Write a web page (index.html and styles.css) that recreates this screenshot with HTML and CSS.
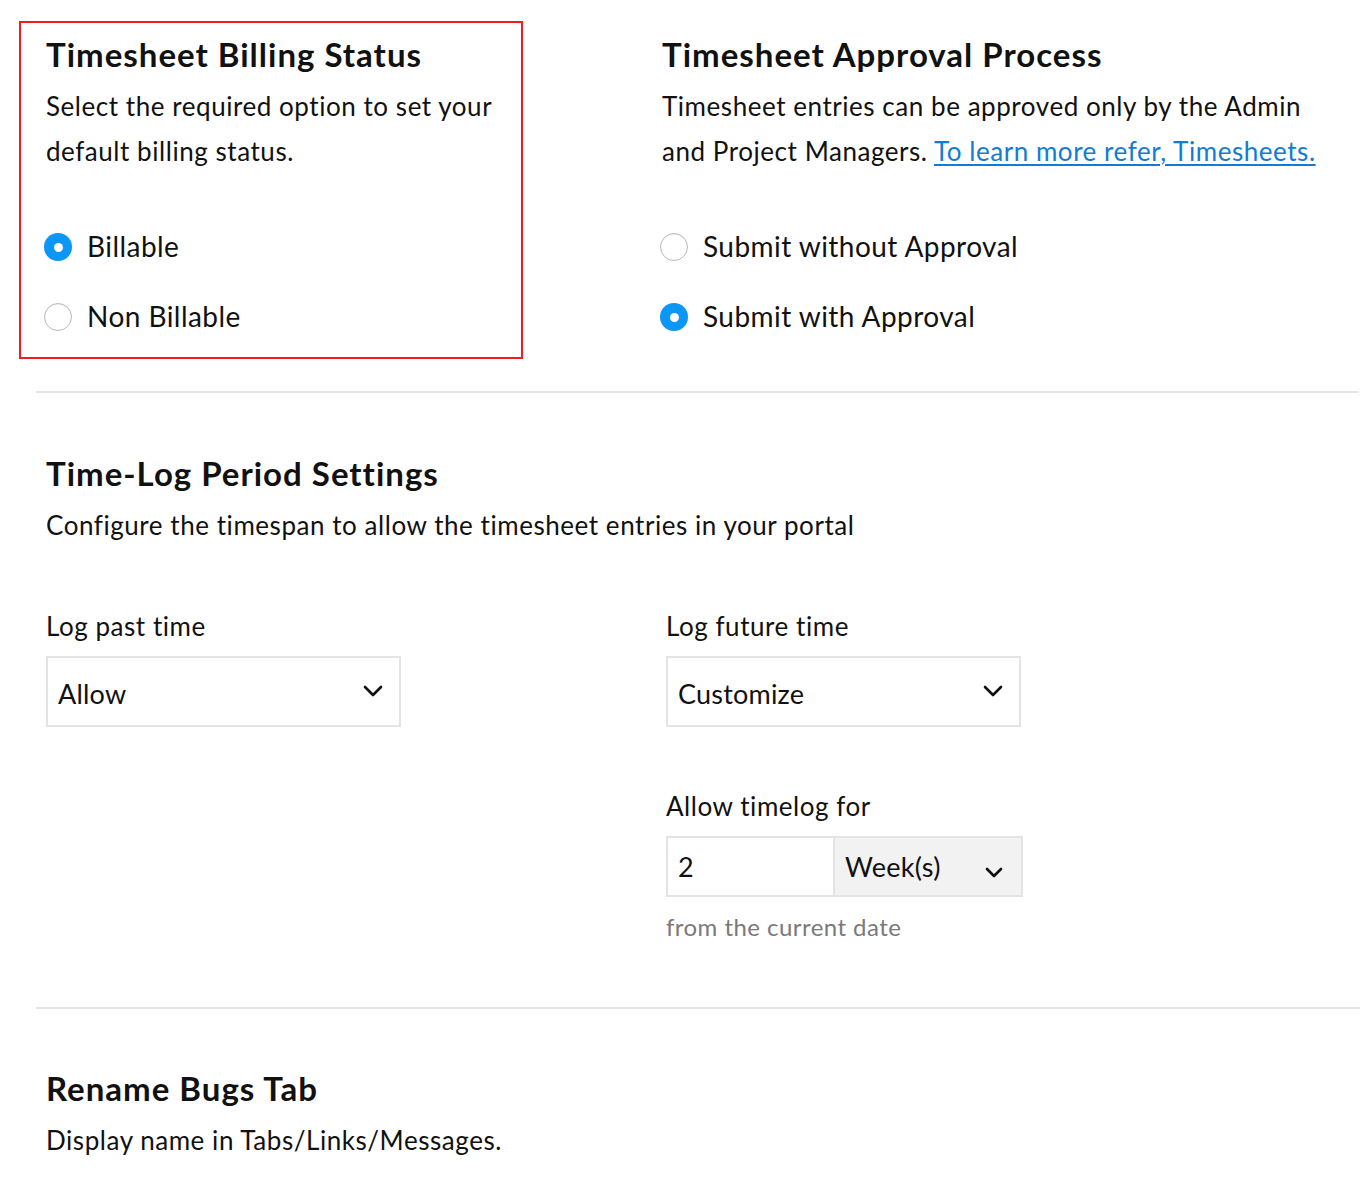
FILE: index.html
```html
<!DOCTYPE html>
<html>
<head>
<meta charset="utf-8">
<link rel="stylesheet" href="styles.css">
</head>
<body>
<div class="page">
  <section class="top">
    <div class="billing">
      <h2 class="title">Timesheet Billing Status</h2>
      <p class="desc">Select the required option to set your default billing status.</p>
      <div class="radios">
        <label class="radio-row"><span class="radio checked"></span><span class="radio-label">Billable</span></label>
        <label class="radio-row"><span class="radio"></span><span class="radio-label">Non Billable</span></label>
      </div>
    </div>
    <div class="approval">
      <h2 class="title">Timesheet Approval Process</h2>
      <p class="desc"><span>Timesheet entries can be approved only by the Admin</span><br><span>and Project Managers.</span> <a class="link" href="#">To learn more refer, Timesheets.</a></p>
      <div class="radios">
        <label class="radio-row"><span class="radio"></span><span class="radio-label">Submit without Approval</span></label>
        <label class="radio-row"><span class="radio checked"></span><span class="radio-label">Submit with Approval</span></label>
      </div>
    </div>
  </section>
  <hr class="divider">
  <section class="section timelog">
    <h2 class="title">Time-Log Period Settings</h2>
    <p class="desc">Configure the timespan to allow the timesheet entries in your portal</p>
    <div class="fields">
      <div class="field-col">
        <div class="field-label">Log past time</div>
        <div class="select"><span>Allow</span>
          <svg class="chev" width="20" height="12" viewBox="0 0 20 12"><path d="M2 2 L10 10 L18 2" fill="none" stroke="#111" stroke-width="2.6" stroke-linecap="round" stroke-linejoin="round"/></svg>
        </div>
      </div>
      <div class="field-col right">
        <div class="field-label">Log future time</div>
        <div class="select"><span>Customize</span>
          <svg class="chev" width="20" height="12" viewBox="0 0 20 12"><path d="M2 2 L10 10 L18 2" fill="none" stroke="#111" stroke-width="2.6" stroke-linecap="round" stroke-linejoin="round"/></svg>
        </div>
        <div class="field-label sub">Allow timelog for</div>
        <div class="group">
          <div class="num">2</div>
          <div class="unit"><span>Week(s)</span>
            <svg class="chev small" width="18" height="11" viewBox="0 0 18 11"><path d="M2 2 L9 9 L16 2" fill="none" stroke="#111" stroke-width="2.6" stroke-linecap="round" stroke-linejoin="round"/></svg>
          </div>
        </div>
        <div class="hint">from the current date</div>
      </div>
    </div>
  </section>
  <hr class="divider second">
  <section class="section bugs">
    <h2 class="title">Rename Bugs Tab</h2>
    <p class="desc">Display name in Tabs/Links/Messages.</p>
  </section>
</div>
</body>
</html>
```

FILE: styles.css
```css
* { box-sizing: border-box; }
html, body { margin: 0; padding: 0; background: #fff; }
body {
  font-family: Lato, "Open Sans", "Liberation Sans", sans-serif;
  color: #111;
  width: 1360px;
  overflow: hidden;
  letter-spacing: 0.5px;
}
.page { padding-top: 21px; }
.top {
  display: flex;
  align-items: flex-start;
}
.billing {
  margin-left: 19px;
  width: 504px;
  border: 2px solid #ee1c25;
  padding: 11px 10px 20px 25px;
}
.approval {
  margin-left: 137px;
  padding-top: 13px;
  width: 690px;
}
.title {
  margin: 0;
  font-size: 33px;
  line-height: 40px;
  font-weight: 700;
  color: #111;
  letter-spacing: 1px;
}
.desc {
  margin: 10px 0 0;
  font-size: 26px;
  line-height: 45px;
  color: #111;
  letter-spacing: 0.55px;
}
.link { color: #117cd6; text-decoration: underline; text-underline-offset: 3px; }
.approval .title, .approval .desc { margin-left: 2px; }
.radios {
  margin-top: 53px;
  display: flex;
  flex-direction: column;
  gap: 30px;
}
.billing .radios { margin-left: -2px; }
.radio-row {
  display: flex;
  align-items: center;
  height: 40px;
  gap: 15px;
}
.radio {
  width: 28px;
  height: 28px;
  border-radius: 50%;
  border: 1.5px solid #b9b9b9;
  background: #fff;
  box-shadow: inset 0 1px 1px rgba(0,0,0,0.06);
  flex: none;
  display: flex;
  align-items: center;
  justify-content: center;
}
.radio.checked {
  border: none;
  background: #0c96f6;
  box-shadow: none;
}
.radio.checked::after {
  content: "";
  width: 9px;
  height: 9px;
  border-radius: 50%;
  background: #fff;
}
.radio-label {
  font-size: 28px;
  line-height: 40px;
  color: #111;
  letter-spacing: 0.45px;
  margin-top: -2px;
}
.divider {
  border: none;
  height: 2px;
  background: #e6e4e1;
  margin: 32px 2px 0 36px;
}
.section { padding-left: 46px; }
.timelog { padding-top: 60px; }
.fields {
  display: flex;
  margin-top: 60px;
}
.field-col { width: 355px; }
.field-col.right { margin-left: 265px; }
.field-label {
  font-size: 26px;
  line-height: 36px;
  color: #111;
  letter-spacing: 0.55px;
}
.field-label.sub { margin-top: 61px; }
.select {
  margin-top: 12px;
  height: 71px;
  border: 2px solid #e4e4e4;
  display: flex;
  align-items: center;
  justify-content: space-between;
  padding: 0 16px 0 10px;
  font-size: 27px;
  letter-spacing: 0.2px;
}
.select span { margin-top: 4px; }
.chev { display: block; margin-top: -2px; }
.group {
  margin-top: 12px;
  display: flex;
  height: 61px;
  width: 357px;
  border: 2px solid #e4e4e4;
}
.num {
  width: 167px;
  border-right: 2px solid #e4e4e4;
  font-size: 27px;
  display: flex;
  align-items: center;
  padding-left: 10px;
  background: #fff;
}
.unit {
  flex: 1;
  background: #f2f2f2;
  display: flex;
  align-items: center;
  justify-content: space-between;
  padding: 0 18px 0 10px;
  font-size: 27px;
  letter-spacing: 0.3px;
}
.chev.small { margin-top: 12px; }
.hint {
  margin-top: 12px;
  font-size: 24px;
  line-height: 36px;
  color: #7a7a7a;
  letter-spacing: 0.45px;
}
.divider.second { margin-top: 62px; margin-left: 36px; margin-right: 0; }
.bugs { padding-top: 59px; padding-bottom: 40px; }
```
